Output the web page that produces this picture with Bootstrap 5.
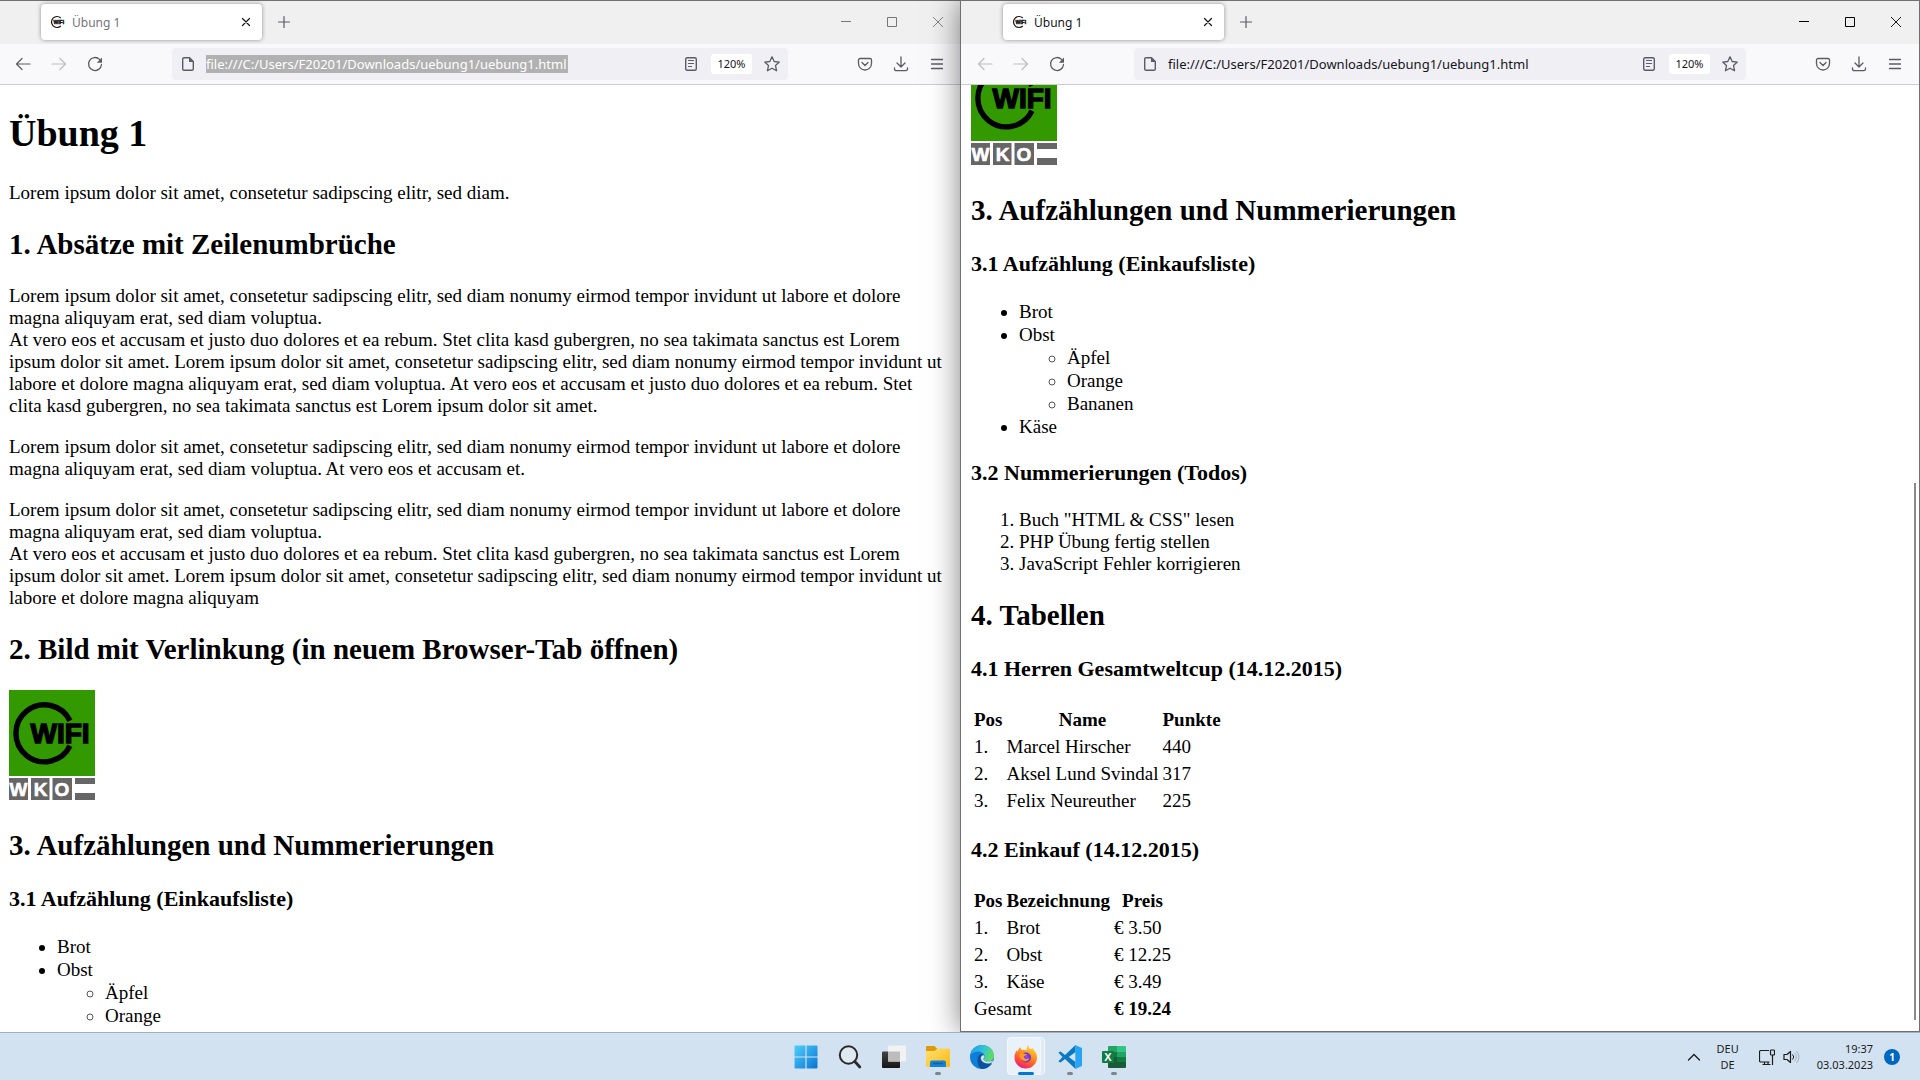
<!DOCTYPE html>
<html lang="de">
<head>
<meta charset="utf-8">
<meta name="viewport" content="width=device-width, initial-scale=1">
<title>Übung 1</title>
<link href="https://cdn.jsdelivr.net/npm/bootstrap@5.3.0/dist/css/bootstrap.min.css" rel="stylesheet">
<style>
  body { font-family: "Noto Sans", "Open Sans", sans-serif; color: #15141a; background: #d3e2f1; }
  button, input { font-family: inherit; color: inherit; }
  .plain-btn { background: none; border: 0; padding: 0; color: inherit; display: flex; align-items: center; justify-content: center; }

  /* browser windows */
  .win-area { min-height: 0; }
  .win { border-top: 1px solid #707073; background: #fff; min-width: 0; }
  .win-back { flex: 0 0 calc(50% + 2px); margin: 0 -1px; }
  .win-back .doc { padding-right: 16px; }
  .win-front { flex: 1 1 0; border: 1px solid #707073; box-shadow: 0 0 28px rgba(0, 0, 0, .5); z-index: 1; }
  .tabstrip { height: 43px; background: #f0f0f0; padding: 3px 0 0 42px; }
  .win-tab { width: 221px; height: 36px; background: #fff; border-radius: 4px; box-shadow: 0 0 4px rgba(0, 0, 0, .4); font-size: 12px; padding: 0 8px 0 9px; }
  .tab-title { margin-left: 6px; padding-top: 1px; }
  .win-back .tab-title { color: #75747a; }
  .tab-close { width: 16px; height: 16px; }
  .tab-new { width: 36px; height: 36px; margin-left: 4px; color: #5b5b66; }
  .win-ctl { width: 46px; height: 36px; color: #000; }
  .win-back .win-ctl { color: #777; }
  .navstrip { height: 41px; background: #f9f9fb; border-bottom: 1px solid #ccccd1; padding: 0 6px; color: #5b5b66; }
  .nav-btn { width: 36px; height: 32px; }
  .nav-btn:disabled { color: #bdbdc2; }
  .urlbar { height: 32px; background: #f0f0f4; border-radius: 4px; margin: 0 59px; padding: 0 2px 0 8px; min-width: 0; }
  .url-text { border: 0; padding: 2px 0 0; margin-left: 10px; height: 18px; width: 362px; background: none; color: #15141a; font-size: 13px; outline: 0; min-width: 0; }
  .url-selected { background: #b1b1b1; color: #fff; }
  .zoom-pill { width: 41px; height: 20px; background: #fff; border-radius: 3px; font-size: 11px; color: #15141a; margin: 0 6px 0 12px; }
  .star-btn { width: 28px; height: 28px; }

  /* page text */
  .doc { font-family: "Liberation Serif", serif; font-size: 19px; line-height: 22px; color: #000; padding: 0 10px; overflow: hidden; min-height: 0; }
  .doc h1, .doc h2, .doc h3 { font-weight: 700; color: #000; }
  .doc h1 { font-size: 38px; line-height: 45px; margin: 26px 0; }
  .doc h2 { font-size: 29px; line-height: 33px; margin: 24px 0; }
  .doc h3 { font-size: 22px; line-height: 26px; margin: 22px 0 23px; }
  .doc p { margin: 19px 0; }
  .doc ul, .doc ol { margin: 19px 0; padding-left: 48px; }
  .doc ul { line-height: 23px; }
  .doc ul ul { margin: 0; }
  .doc ul ul li::marker { color: #555; }
  .doc .logo-line { height: 115px; margin: 24px 0; }
  .doc .scrolled { margin-top: -30px; }
  .logo-line a, .logo-line svg { display: block; width: 86px; }
  .doc table { border-collapse: separate; border-spacing: 2px; line-height: 23px; }
  .doc th, .doc td { padding: 1px; }
  .doc th { text-align: center; }
  .scroll-thumb { position: absolute; right: 3px; top: 482px; bottom: 11px; width: 2px; background: #8a8a8a; }

  /* taskbar */
  .taskbar { height: 48px; background: #d3e2f1; border-top: 1px solid #a3afbc; z-index: 2; color: #1b1b1b; font-size: 11px; line-height: 16px; }
  .task-side { flex: 1 1 0; }
  .task-btn { width: 44px; height: 47px; position: relative; }
  .task-btn .running { position: absolute; bottom: 5px; left: 19px; width: 6px; height: 3px; border-radius: 2px; background: #7c858d; }
  .task-active::before, .task-active::after { content: ""; position: absolute; top: 4px; height: 38px; border-radius: 4px; background: #e9f1f9; border: 1px solid #f4f8fc; }
  .task-active::before { left: 3px; width: 38px; background: #dfeaf5; }
  .task-active::after { left: 3px; width: 34px; }
  .task-active svg { z-index: 1; position: relative; }
  .task-active .running { left: 14px; width: 16px; background: #0078d4; z-index: 2; }
  .note-count { width: 16px; height: 16px; margin: 0 20px 0 11px; border-radius: 50%; background: #0067c0; color: #fff; font-size: 10px; }
</style>
</head>
<body>

<svg width="0" height="0" class="d-none">
  <symbol id="i-wifi" viewBox="0 0 16 16"><path d="M10.800 4A5.500 5.500 0 1 0 10.800 12" fill="none" stroke="#111" stroke-width="1.200"/><text x="3.500" y="10" font-family="Liberation Sans" font-weight="700" font-size="5" stroke="#111" stroke-width=".4">WIFI</text></symbol>
  <symbol id="i-x" viewBox="0 0 16 16"><path d="M4.500 4.500l7 7M11.500 4.500l-7 7" fill="none" stroke="currentColor" stroke-width="1.200" stroke-linecap="round"/></symbol>
  <symbol id="i-plus" viewBox="0 0 16 16"><path d="M8 2.500v11M2.500 8h11" fill="none" stroke="currentColor" stroke-width="1.200" stroke-linecap="round"/></symbol>
  <symbol id="i-min" viewBox="0 0 12 12"><path d="M1 5.500h10" stroke="currentColor"/></symbol>
  <symbol id="i-max" viewBox="0 0 12 12"><path d="M1.500 1.500h9v9h-9z" fill="none" stroke="currentColor"/></symbol>
  <symbol id="i-close" viewBox="0 0 12 12"><path d="M1 1l10 10M11 1L1 11" stroke="currentColor" stroke-width=".9"/></symbol>
  <symbol id="i-back" viewBox="0 0 16 16"><path d="M15 8H1.500M7 2.500L1.500 8 7 13.500" fill="none" stroke="currentColor" stroke-width="1.200" stroke-linecap="round" stroke-linejoin="round"/></symbol>
  <symbol id="i-fwd" viewBox="0 0 16 16"><path d="M1 8h13.500M9 2.500L14.500 8 9 13.500" fill="none" stroke="currentColor" stroke-width="1.200" stroke-linecap="round" stroke-linejoin="round"/></symbol>
  <symbol id="i-reload" viewBox="0 0 16 16"><path d="M12.600 3.400A6.500 6.500 0 1 0 14.500 8.500" fill="none" stroke="currentColor" stroke-width="1.300" stroke-linecap="round"/><path d="M15 1.500V6.200a.5.5 0 0 1-.5.5H9.800z" fill="currentColor"/></symbol>
  <symbol id="i-page" viewBox="0 0 16 16"><path d="M4 1.700h5.500L13.300 5.500V13a1.300 1.300 0 0 1-1.300 1.300H4A1.300 1.300 0 0 1 2.700 13V3A1.300 1.300 0 0 1 4 1.700z" fill="none" stroke="currentColor" stroke-width="1.400"/><path d="M9 1.500V6h4.500z" fill="currentColor"/></symbol>
  <symbol id="i-reader" viewBox="0 0 16 16"><rect x="2.700" y="1.700" width="10.600" height="12.600" rx="1.500" fill="none" stroke="currentColor" stroke-width="1.400"/><path d="M5.500 4.500h5M5.500 7.500h5M5.500 10.500h3" stroke="currentColor" stroke-width="1.200" stroke-linecap="round"/></symbol>
  <symbol id="i-star" viewBox="0 0 16 16"><path d="M8 .8l2.200 4.700 5.100.6-3.800 3.500 1.100 5.200L8 12.200l-4.600 2.600 1.100-5.200L.7 6.100l5.100-.6z" fill="none" stroke="currentColor" stroke-width="1.300" stroke-linejoin="round"/></symbol>
  <symbol id="i-pocket" viewBox="0 0 16 16"><path d="M3 2.500h10a1.500 1.500 0 0 1 1.500 1.500v3.500a6.500 6.500 0 0 1-13 0V4A1.500 1.500 0 0 1 3 2.500z" fill="none" stroke="currentColor" stroke-width="1.300"/><path d="M5 6.500l3 3 3-3" fill="none" stroke="currentColor" stroke-width="1.400" stroke-linecap="round" stroke-linejoin="round"/></symbol>
  <symbol id="i-down" viewBox="0 0 16 16"><path d="M8 .8v9.700M4 7l4 4 4-4M1.500 12v1a1.700 1.700 0 0 0 1.700 1.700h9.600a1.700 1.700 0 0 0 1.700-1.700v-1" fill="none" stroke="currentColor" stroke-width="1.300" stroke-linecap="round" stroke-linejoin="round"/></symbol>
  <symbol id="i-menu" viewBox="0 0 16 16"><path d="M2.500 3.500h11M2.500 8h11M2.500 12.500h11" stroke="currentColor" stroke-width="1.300" stroke-linecap="round"/></symbol>
  <symbol id="i-logo" viewBox="0 0 86 110">
    <rect width="86" height="86" fill="#339900"/>
    <path d="M61 30.800A28.500 28.500 0 1 0 61 55.800" fill="none" stroke="#000" stroke-width="5.400"/>
    <text x="21.500" y="52.700" font-family="Liberation Sans" font-weight="700" font-size="28" stroke="#000" stroke-width="1.400">WIFI</text>
    <path d="M0 88h19v22H0zM22 88h18.500v22H22zM43.500 88H63v22H43.500zM66 88h20v6H66zM66 103h20v7H66z" fill="#666"/>
    <g font-family="Liberation Sans" font-weight="700" font-size="19" fill="#fff" stroke="#fff" stroke-width=".6" text-anchor="middle"><text x="9.500" y="106">W</text><text x="31.500" y="106">K</text><text x="53" y="106">O</text></g>
  </symbol>
</svg>

<div class="vh-100 d-flex flex-column overflow-hidden">
  <main class="win-area d-flex flex-grow-1">

    <section class="win win-back d-flex flex-column">
      <header class="tabstrip d-flex flex-shrink-0">
        <div class="win-tab d-flex align-items-center">
          <svg width="16" height="16"><use href="#i-wifi"/></svg>
          <span class="tab-title flex-grow-1">Übung 1</span>
          <button class="plain-btn tab-close" aria-label="Tab schließen"><svg width="16" height="16"><use href="#i-x"/></svg></button>
        </div>
        <button class="plain-btn tab-new" aria-label="Neuer Tab"><svg width="16" height="16"><use href="#i-plus"/></svg></button>
        <div class="d-flex ms-auto">
          <button class="plain-btn win-ctl" aria-label="Minimieren"><svg width="12" height="12"><use href="#i-min"/></svg></button>
          <button class="plain-btn win-ctl" aria-label="Maximieren"><svg width="12" height="12"><use href="#i-max"/></svg></button>
          <button class="plain-btn win-ctl" aria-label="Schließen"><svg width="12" height="12"><use href="#i-close"/></svg></button>
        </div>
      </header>
      <nav class="navstrip d-flex align-items-center flex-shrink-0">
        <button class="plain-btn nav-btn" aria-label="Zurück"><svg width="16" height="16"><use href="#i-back"/></svg></button>
        <button class="plain-btn nav-btn" aria-label="Vor" disabled><svg width="16" height="16"><use href="#i-fwd"/></svg></button>
        <button class="plain-btn nav-btn" aria-label="Neu laden"><svg width="16" height="16"><use href="#i-reload"/></svg></button>
        <div class="urlbar d-flex align-items-center flex-grow-1">
          <svg width="16" height="16"><use href="#i-page"/></svg>
          <input class="url-text url-selected" type="text" aria-label="Adresse" value="file:///C:/Users/F20201/Downloads/uebung1/uebung1.html">
          <button class="plain-btn ms-auto" aria-label="Leseansicht"><svg width="16" height="16"><use href="#i-reader"/></svg></button>
          <button class="plain-btn zoom-pill">120%</button>
          <button class="plain-btn star-btn" aria-label="Lesezeichen"><svg width="16" height="16"><use href="#i-star"/></svg></button>
        </div>
        <button class="plain-btn nav-btn" aria-label="Pocket"><svg width="16" height="16"><use href="#i-pocket"/></svg></button>
        <button class="plain-btn nav-btn" aria-label="Downloads"><svg width="16" height="16"><use href="#i-down"/></svg></button>
        <button class="plain-btn nav-btn" aria-label="Menü"><svg width="16" height="16"><use href="#i-menu"/></svg></button>
      </nav>
      <article class="doc flex-grow-1">
        <h1>Übung 1</h1>
        <p>Lorem ipsum dolor sit amet, consetetur sadipscing elitr, sed diam.</p>
        <h2>1. Absätze mit Zeilenumbrüche</h2>
        <p>Lorem ipsum dolor sit amet, consetetur sadipscing elitr, sed diam nonumy eirmod tempor invidunt ut labore et dolore magna aliquyam erat, sed diam voluptua.<br>
        At vero eos et accusam et justo duo dolores et ea rebum. Stet clita kasd gubergren, no sea takimata sanctus est Lorem ipsum dolor sit amet. Lorem ipsum dolor sit amet, consetetur sadipscing elitr, sed diam nonumy eirmod tempor invidunt ut labore et dolore magna aliquyam erat, sed diam voluptua. At vero eos et accusam et justo duo dolores et ea rebum. Stet clita kasd gubergren, no sea takimata sanctus est Lorem ipsum dolor sit amet.</p>
        <p>Lorem ipsum dolor sit amet, consetetur sadipscing elitr, sed diam nonumy eirmod tempor invidunt ut labore et dolore magna aliquyam erat, sed diam voluptua. At vero eos et accusam et.</p>
        <p>Lorem ipsum dolor sit amet, consetetur sadipscing elitr, sed diam nonumy eirmod tempor invidunt ut labore et dolore magna aliquyam erat, sed diam voluptua.<br>
        At vero eos et accusam et justo duo dolores et ea rebum. Stet clita kasd gubergren, no sea takimata sanctus est Lorem ipsum dolor sit amet. Lorem ipsum dolor sit amet, consetetur sadipscing elitr, sed diam nonumy eirmod tempor invidunt ut labore et dolore magna aliquyam</p>
        <h2>2. Bild mit Verlinkung (in neuem Browser-Tab öffnen)</h2>
        <div class="logo-line"><a href="#" target="_blank" aria-label="WIFI WKO"><svg width="86" height="110"><use href="#i-logo"/></svg></a></div>
        <h2>3. Aufzählungen und Nummerierungen</h2>
        <h3>3.1 Aufzählung (Einkaufsliste)</h3>
        <ul>
          <li>Brot</li>
          <li>Obst
            <ul><li>Äpfel</li><li>Orange</li></ul>
          </li>
        </ul>
      </article>
    </section>

    <section class="win win-front d-flex flex-column position-relative">
      <header class="tabstrip d-flex flex-shrink-0">
        <div class="win-tab d-flex align-items-center">
          <svg width="16" height="16"><use href="#i-wifi"/></svg>
          <span class="tab-title flex-grow-1">Übung 1</span>
          <button class="plain-btn tab-close" aria-label="Tab schließen"><svg width="16" height="16"><use href="#i-x"/></svg></button>
        </div>
        <button class="plain-btn tab-new" aria-label="Neuer Tab"><svg width="16" height="16"><use href="#i-plus"/></svg></button>
        <div class="d-flex ms-auto">
          <button class="plain-btn win-ctl" aria-label="Minimieren"><svg width="12" height="12"><use href="#i-min"/></svg></button>
          <button class="plain-btn win-ctl" aria-label="Maximieren"><svg width="12" height="12"><use href="#i-max"/></svg></button>
          <button class="plain-btn win-ctl" aria-label="Schließen"><svg width="12" height="12"><use href="#i-close"/></svg></button>
        </div>
      </header>
      <nav class="navstrip d-flex align-items-center flex-shrink-0">
        <button class="plain-btn nav-btn" aria-label="Zurück" disabled><svg width="16" height="16"><use href="#i-back"/></svg></button>
        <button class="plain-btn nav-btn" aria-label="Vor" disabled><svg width="16" height="16"><use href="#i-fwd"/></svg></button>
        <button class="plain-btn nav-btn" aria-label="Neu laden"><svg width="16" height="16"><use href="#i-reload"/></svg></button>
        <div class="urlbar d-flex align-items-center flex-grow-1">
          <svg width="16" height="16"><use href="#i-page"/></svg>
          <input class="url-text" type="text" aria-label="Adresse" value="file:///C:/Users/F20201/Downloads/uebung1/uebung1.html">
          <button class="plain-btn ms-auto" aria-label="Leseansicht"><svg width="16" height="16"><use href="#i-reader"/></svg></button>
          <button class="plain-btn zoom-pill">120%</button>
          <button class="plain-btn star-btn" aria-label="Lesezeichen"><svg width="16" height="16"><use href="#i-star"/></svg></button>
        </div>
        <button class="plain-btn nav-btn" aria-label="Pocket"><svg width="16" height="16"><use href="#i-pocket"/></svg></button>
        <button class="plain-btn nav-btn" aria-label="Downloads"><svg width="16" height="16"><use href="#i-down"/></svg></button>
        <button class="plain-btn nav-btn" aria-label="Menü"><svg width="16" height="16"><use href="#i-menu"/></svg></button>
      </nav>
      <article class="doc flex-grow-1">
        <div class="logo-line scrolled"><a href="#" target="_blank" aria-label="WIFI WKO"><svg width="86" height="110"><use href="#i-logo"/></svg></a></div>
        <h2>3. Aufzählungen und Nummerierungen</h2>
        <h3>3.1 Aufzählung (Einkaufsliste)</h3>
        <ul>
          <li>Brot</li>
          <li>Obst
            <ul><li>Äpfel</li><li>Orange</li><li>Bananen</li></ul>
          </li>
          <li>Käse</li>
        </ul>
        <h3>3.2 Nummerierungen (Todos)</h3>
        <ol>
          <li>Buch "HTML &amp; CSS" lesen</li>
          <li>PHP Übung fertig stellen</li>
          <li>JavaScript Fehler korrigieren</li>
        </ol>
        <h2>4. Tabellen</h2>
        <h3>4.1 Herren Gesamtweltcup (14.12.2015)</h3>
        <table>
          <thead><tr><th>Pos</th><th>Name</th><th>Punkte</th></tr></thead>
          <tbody>
            <tr><td>1.</td><td>Marcel Hirscher</td><td>440</td></tr>
            <tr><td>2.</td><td>Aksel Lund Svindal</td><td>317</td></tr>
            <tr><td>3.</td><td>Felix Neureuther</td><td>225</td></tr>
          </tbody>
        </table>
        <h3>4.2 Einkauf (14.12.2015)</h3>
        <table>
          <thead><tr><th>Pos</th><th>Bezeichnung</th><th>Preis</th></tr></thead>
          <tbody>
            <tr><td>1.</td><td>Brot</td><td>€ 3.50</td></tr>
            <tr><td>2.</td><td>Obst</td><td>€ 12.25</td></tr>
            <tr><td>3.</td><td>Käse</td><td>€ 3.49</td></tr>
            <tr><td colspan="2">Gesamt</td><td><b>€ 19.24</b></td></tr>
          </tbody>
        </table>
      </article>
      <div class="scroll-thumb"></div>
    </section>
  </main>

  <footer class="taskbar d-flex flex-shrink-0 position-relative">
    <div class="task-side"></div>
    <div class="d-flex">
      <button class="plain-btn task-btn" aria-label="Start"><svg width="24" height="24" viewBox="0 0 24 24"><defs><linearGradient id="gw" x1="0" y1="0" x2="1" y2="1"><stop offset="0" stop-color="#4fd0fb"/><stop offset="1" stop-color="#0a74d2"/></linearGradient></defs><rect x=".5" y=".5" width="23" height="23" rx="1" fill="url(#gw)"/><path d="M12 0v24M0 12h24" stroke="#d3e2f1" stroke-width="1.200"/></svg></button>
      <button class="plain-btn task-btn" aria-label="Suche"><svg width="24" height="24" viewBox="0 0 24 24"><circle cx="10.500" cy="10" r="8.700" fill="#dfe9f2" stroke="#2a2a2a" stroke-width="2"/><path d="M16.800 16.500l5 5.500" stroke="#2a2a2a" stroke-width="2.800" stroke-linecap="round"/></svg></button>
      <button class="plain-btn task-btn" aria-label="Aktive Anwendungen"><svg width="24" height="24" viewBox="0 0 24 24"><defs><linearGradient id="gt" x1="0" y1="0" x2="0" y2="1"><stop offset="0" stop-color="#444"/><stop offset="1" stop-color="#151515"/></linearGradient></defs><rect y="6.500" width="18" height="16.500" rx="1" fill="url(#gt)"/><rect x="6" y=".5" width="18" height="16" rx="1" fill="#f2f2f2"/><rect x="6" y="6.500" width="12" height="10" fill="#bcbcbc"/></svg></button>
      <button class="plain-btn task-btn" aria-label="Explorer"><svg width="24" height="24" viewBox="0 0 24 24"><defs><linearGradient id="ge" x1="0" y1="0" x2="1" y2="1"><stop offset="0" stop-color="#ffdf75"/><stop offset="1" stop-color="#fbb90f"/></linearGradient></defs><path d="M0 2a1 1 0 0 1 1-1h7.500l3 3H23v4H0z" fill="#dd9b0a"/><path d="M0 6h8.500l3-2.500H23a1 1 0 0 1 1 1V21a1 1 0 0 1-1 1H1a1 1 0 0 1-1-1z" fill="url(#ge)"/><path d="M4 22v-4.500a2 2 0 0 1 2-2h12a2 2 0 0 1 2 2V22z" fill="#1381d8"/><path d="M7 18.500h10" stroke="#0a5fae" stroke-width="1.500"/></svg><span class="running"></span></button>
      <button class="plain-btn task-btn" aria-label="Edge"><svg width="24" height="24" viewBox="0 0 24 24"><defs><linearGradient id="g1" x1="0" y1=".3" x2="1" y2=".6"><stop offset="0" stop-color="#1b9fe8"/><stop offset=".5" stop-color="#33c3d8"/><stop offset="1" stop-color="#66e052"/></linearGradient></defs><circle cx="12" cy="12" r="12" fill="#0f7ed6"/><path d="M.3 10C1.500 4 6.300 0 12 0c7 0 12 5 12 10.500 0 4-3.200 6-6.300 6-2.700 0-4.200-1-4.200-2.200 0-.8 1-1.300 1-3C14.500 9 12 6.500 8.500 6.500 4.500 6.500 1.500 8.500.3 10z" fill="url(#g1)"/><path d="M7.500 15c0-3 1.500-5.500 4-6 2 .5 3 1.700 3 3 0 1.400-1 1.500-1 2.500 0 1.500 2 2.800 4.500 2.800 1.800 0 3.200-.5 4.500-1.300-1.500 4-5.500 8-10.500 8-2.500-.5-4.500-4-4.500-9z" fill="#0c51a0"/><path d="M11.500 11c-.8 1-.9 2.500-.5 3.500 1 2.700 4 4 7 4 2 0 3.500-.7 4.300-1.500l.7-1.700c-1.500 1-3 1.300-5 1.300-2.500 0-4.500-1-4.500-2.400 0-.8 1-1.200 1-2.700-.6-1.700-2-1.700-3-.5z" fill="#d3e2f1"/><path d="M21.300 18.700l1.700-3 1.500 4.500z" fill="#d3e2f1"/></svg></button>
      <button class="plain-btn task-btn task-active" aria-label="Firefox"><svg width="24" height="24" viewBox="0 0 24 24"><defs><linearGradient id="g2" x1=".8" y1="0" x2=".3" y2="1"><stop offset="0" stop-color="#ffe83f"/><stop offset=".45" stop-color="#ff8a1e"/><stop offset=".75" stop-color="#ff4a3c"/><stop offset="1" stop-color="#e5178a"/></linearGradient><radialGradient id="g3"><stop offset="0" stop-color="#9a4bff"/><stop offset="1" stop-color="#5b37c4"/></radialGradient></defs><path d="M14.500 0c-.3 2 .5 3.200 2 4.300C19 3.800 18 3 18.500 2.500c.7 2 2 3 3 4.500 1 1.600 1.800 3.500 1.500 6.500C22.500 19 18 23.500 12 23.500S.5 19 .5 12.500C.5 9.500 1.500 7 3 5c0 .8.200 1.500.4 2C4 5 5 3 6.500 2c0 1.300.7 2.500 1.500 3 2-.4 3.500-.3 4.800.3C12.500 3.500 13 1 14.500 0z" fill="url(#g2)"/><circle cx="12" cy="12.500" r="5" fill="url(#g3)"/><path d="M5 9c2-1.500 4-1 5.500-.3.500.2 1.500.3 2.500.3-.3 1.300-2 1.500-2.800 2-.7.600-.5 2.300 1 2.800 2 .7 3-.3 4.300-.3-1 2-3 3.200-5.500 2.500C7 15 5 12 5 9z" fill="#ff9a22"/></svg><span class="running"></span></button>
      <button class="plain-btn task-btn" aria-label="Visual Studio Code"><svg width="24" height="24" viewBox="0 0 24 24"><path d="M17.500 0L7 10 2.500 6.500.3 7.600 4.500 12 .3 16.400l2.200 1.100L7 14l10.500 10V17l-6.700-5 6.700-5z" fill="#0a79c4"/><path d="M17.300 0L24 3v18l-6.700 3z" fill="#28a5f2"/></svg><span class="running"></span></button>
      <button class="plain-btn task-btn" aria-label="Excel"><svg width="24" height="24" viewBox="0 0 24 24"><path d="M6 2a1 1 0 0 1 1-1h8v6H6z" fill="#21a366"/><path d="M15 1h8a1 1 0 0 1 1 1v5h-9z" fill="#33c481"/><path d="M6 7h9v5H6z" fill="#107c41"/><path d="M15 7h9v5h-9z" fill="#21a366"/><path d="M6 12h9v5H6zM6 17h18v5a1 1 0 0 1-1 1H7a1 1 0 0 1-1-1z" fill="#185c37"/><path d="M15 12h9v5h-9z" fill="#107c41"/><rect y="6" width="12" height="12" rx="1" fill="#107c41"/><text x="6" y="16" text-anchor="middle" font-family="Liberation Sans" font-weight="700" font-size="11" fill="#fff">X</text></svg><span class="running"></span></button>
    </div>
    <div class="task-side d-flex align-items-center justify-content-end">
      <button class="plain-btn me-3" aria-label="Ausgeblendete Symbole"><svg width="14" height="14" viewBox="0 0 14 14"><path d="M1.500 10L7 4.500 12.500 10" fill="none" stroke="#1b1b1b" stroke-width="1.300" stroke-linecap="round"/></svg></button>
      <button class="plain-btn text-center me-3">DEU<br>DE</button>
      <button class="plain-btn gap-2 me-3" aria-label="Netzwerk und Ton"><svg class="ms-1" width="16" height="18" viewBox="0 0 16 18"><path d="M10 2.500H2A1.500 1.500 0 0 0 .5 4v8.500A1.500 1.500 0 0 0 2 14h8.500M3.500 16.500h8M5.500 14v2.500M9 14v2.500" fill="none" stroke="#1b1b1b" stroke-width="1.200"/><rect x="11.500" y="2" width="4" height="5" rx="1" fill="none" stroke="#1b1b1b" stroke-width="1.200"/><path d="M13.500 7v10" stroke="#1b1b1b" stroke-width="1.200"/></svg><svg width="18" height="16" viewBox="0 0 18 16"><path d="M1 5.500h3L7.500 2.500v11L4 10.500H1z" fill="none" stroke="#1b1b1b" stroke-width="1.200" stroke-linejoin="round"/><path d="M9.500 5.500a3.500 3.500 0 0 1 0 5" fill="none" stroke="#1b1b1b"/><path d="M11.500 3.700a6 6 0 0 1 0 8.600M13.500 2a8.500 8.500 0 0 1 0 12" fill="none" stroke="#a5b0ba"/></svg></button>
      <button class="plain-btn text-end">19:37<br>03.03.2023</button>
      <span class="note-count d-flex align-items-center justify-content-center fw-bold">1</span>
    </div>
  </footer>
</div>
<script src="https://cdn.jsdelivr.net/npm/bootstrap@5.3.0/dist/js/bootstrap.bundle.min.js"></script>
</body>
</html>
